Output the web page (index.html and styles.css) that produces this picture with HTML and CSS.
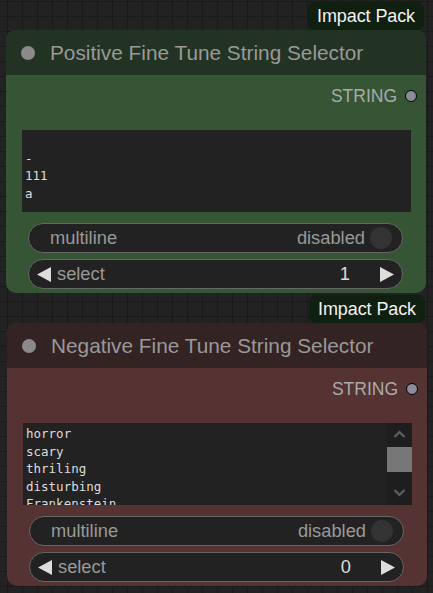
FILE: index.html
```html
<!DOCTYPE html>
<html>
<head>
<meta charset="utf-8">
<link rel="stylesheet" href="styles.css">
</head>
<body>
<div class="canvas">
  <div class="group first">
    <div class="badge">Impact Pack</div>
    <div class="node green">
      <div class="title"><span class="dot"></span><span class="title-text">Positive Fine Tune String Selector</span></div>
      <div class="body">
        <div class="output"><span class="out-label">STRING</span><span class="slot"></span></div>
        <div class="text-box">
          <div class="ta">
-
111
a</div>
        </div>
        <div class="widget">
          <span class="w-label">multiline</span>
          <span class="w-right">disabled</span>
          <span class="knob"></span>
        </div>
        <div class="widget">
          <svg class="arrow" width="14" height="15" viewBox="0 0 14 15"><polygon points="14,0 14,15 0,7.5" fill="#dddddd"/></svg>
          <span class="w-label sel">select</span>
          <span class="w-value">1</span>
          <svg class="arrow" width="14" height="15" viewBox="0 0 14 15"><polygon points="0,0 0,15 14,7.5" fill="#dddddd"/></svg>
        </div>
      </div>
    </div>
  </div>
  <div class="group second">
    <div class="badge">Impact Pack</div>
    <div class="node red">
      <div class="title"><span class="dot"></span><span class="title-text">Negative Fine Tune String Selector</span></div>
      <div class="body">
        <div class="output"><span class="out-label">STRING</span><span class="slot"></span></div>
        <div class="text-box">
          <div class="ta">horror
scary
thriling
disturbing
Frankenstein
</div>
          <div class="scrollbar">
            <svg class="chev" width="25" height="24" viewBox="0 0 25 24"><polyline points="7.5,14 12.5,9 17.5,14" fill="none" stroke="#5f5f5f" stroke-width="2.2"/></svg>
            <div class="thumb"></div>
            <div class="track"></div>
            <svg class="chev" width="25" height="24" viewBox="0 0 25 24"><polyline points="7.5,9 12.5,14 17.5,9" fill="none" stroke="#5f5f5f" stroke-width="2.2"/></svg>
          </div>
        </div>
        <div class="widget">
          <span class="w-label">multiline</span>
          <span class="w-right">disabled</span>
          <span class="knob"></span>
        </div>
        <div class="widget">
          <svg class="arrow" width="14" height="15" viewBox="0 0 14 15"><polygon points="14,0 14,15 0,7.5" fill="#dddddd"/></svg>
          <span class="w-label sel">select</span>
          <span class="w-value">0</span>
          <svg class="arrow" width="14" height="15" viewBox="0 0 14 15"><polygon points="0,0 0,15 14,7.5" fill="#dddddd"/></svg>
        </div>
      </div>
    </div>
  </div>
</div>
</body>
</html>
```

FILE: styles.css
```css
html, body {
  margin: 0;
  padding: 0;
}
body {
  width: 433px;
  height: 593px;
  overflow: hidden;
  background-color: #222222;
  background-image:
    linear-gradient(#1a1a1a 1px, transparent 1px),
    linear-gradient(90deg, #1a1a1a 1px, transparent 1px);
  background-size: 15px 15px;
  background-position: 7px 1px;
  font-family: "Liberation Sans", Arial, sans-serif;
}
.canvas {
  display: flex;
  flex-direction: column;
  gap: 2px;
  padding: 2px 0 0 6px;
}
.group {
  width: 420px;
  display: flex;
  flex-direction: column;
}
.group.second {
  margin-left: 1px;
}
.badge {
  align-self: flex-end;
  margin-right: 2px;
  height: 28px;
  padding: 0 9px;
  display: flex;
  align-items: center;
  background: #0f1f10;
  color: #f2f2f2;
  font-size: 18px;
  border-radius: 7px;
  letter-spacing: -0.1px;
}
.node {
  border-radius: 10px;
  overflow: hidden;
  display: flex;
  flex-direction: column;
}
.node.green { background: #355535; }
.node.red { background: #553333; }
.node.green .title { background: #233323; }
.node.red .title { background: #332323; }
.title {
  height: 45px;
  display: flex;
  align-items: center;
  padding-left: 15px;
  gap: 15px;
}
.dot {
  width: 14px;
  height: 14px;
  border-radius: 50%;
  background: #8a8a8a;
}
.title-text {
  color: #999999;
  font-size: 20.8px;
}
.body {
  display: flex;
  flex-direction: column;
  padding-bottom: 4px;
}
.output {
  margin-top: 6px;
  height: 30px;
  display: flex;
  align-items: center;
  justify-content: flex-end;
  padding-right: 9px;
  gap: 8px;
}
.out-label {
  color: #aaaaaa;
  font-size: 17.5px;
}
.slot {
  width: 10px;
  height: 10px;
  border-radius: 50%;
  background: #8c8c9c;
  border: 1px solid #000;
}
.text-box {
  margin: 19px 15px 0 16px;
  height: 82px;
  background: #222222;
  display: flex;
}
.ta {
  flex: 1;
  overflow: hidden;
  white-space: pre;
  padding: 2px 3px;
  font-family: "DejaVu Sans Mono", monospace;
  font-size: 12.5px;
  line-height: 17.5px;
  color: #dddddd;
}
.scrollbar {
  width: 25px;
  background: #1e1e1e;
  display: flex;
  flex-direction: column;
}
.chev {
  display: block;
  flex: none;
}
.thumb {
  height: 25px;
  background: #777777;
  flex: none;
}
.track {
  flex: 1;
}
.widget {
  margin: 11px 23px 0 22px;
  height: 28px;
  border: 1px solid #666666;
  border-radius: 15px;
  background: #222222;
  display: flex;
  align-items: center;
  color: #999999;
  font-size: 18.3px;
}
.widget + .widget {
  margin-top: 6px;
}
.w-label {
  margin-left: 21px;
}
.w-label.sel {
  margin-left: 6px;
}
.w-right {
  margin-left: auto;
  margin-right: 5px;
}
.knob {
  width: 22px;
  height: 22px;
  border-radius: 50%;
  background: #333333;
  margin-right: 10px;
}
.arrow {
  display: block;
  margin-left: 8px;
}
.w-value {
  margin-left: auto;
  margin-right: 30px;
  color: #dddddd;
}
.w-value + .arrow {
  margin-left: 0;
  margin-right: 8px;
}
```
